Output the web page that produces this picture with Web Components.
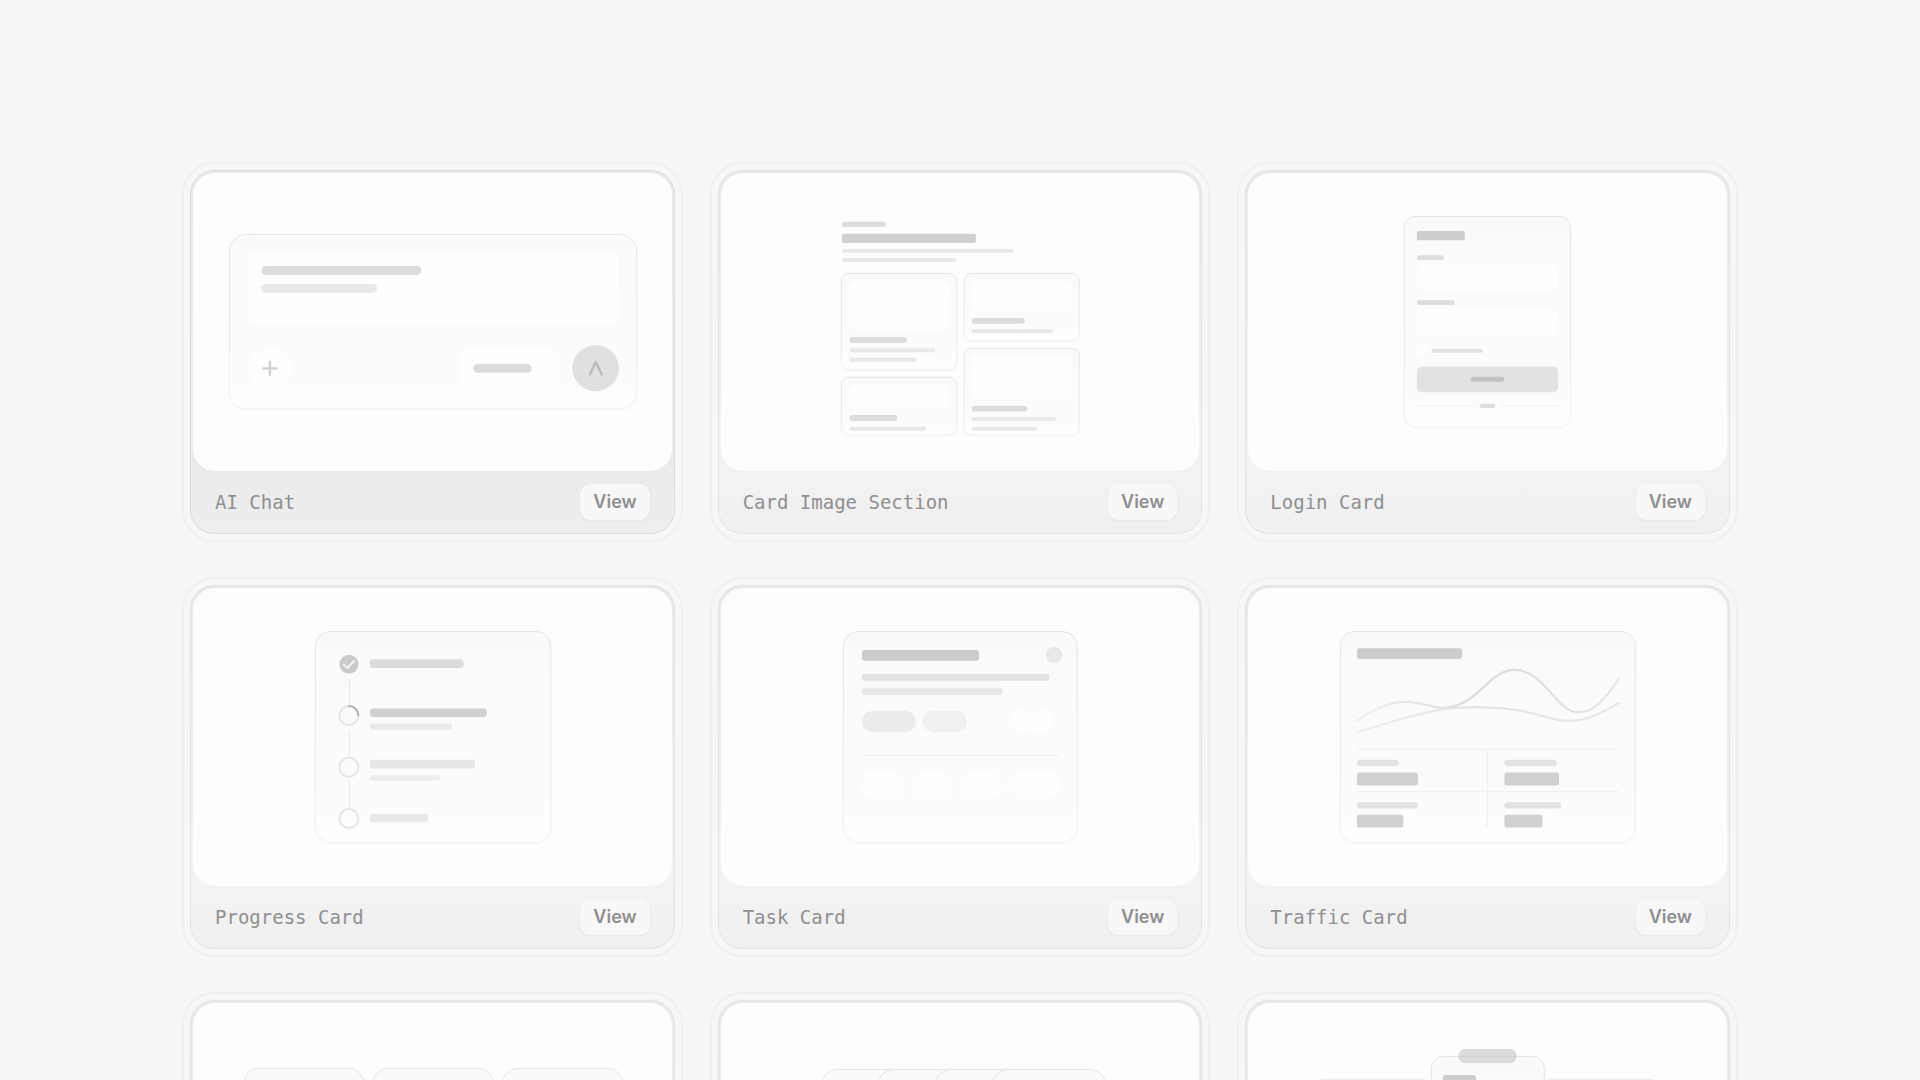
<!DOCTYPE html>
<html lang="en">
<head>
<meta charset="utf-8">
<meta name="viewport" content="width=device-width, initial-scale=1">
<title>Blocks</title>
<style>
  body {
    margin: 0;
    background: #f7f7f9;
    color: #8f8f8f;
    font-family: Inter, "Liberation Sans", sans-serif;
  }
</style>
</head>
<body>

<block-gallery>
  <block-card label="AI Chat" active><block-art name="chat"></block-art></block-card>
  <block-card label="Card Image Section"><block-art name="images"></block-art></block-card>
  <block-card label="Login Card"><block-art name="login"></block-art></block-card>
  <block-card label="Progress Card"><block-art name="progress"></block-art></block-card>
  <block-card label="Task Card"><block-art name="task"></block-art></block-card>
  <block-card label="Traffic Card"><block-art name="traffic"></block-art></block-card>
  <block-card><block-art name="columns"></block-art></block-card>
  <block-card><block-art name="stack"></block-art></block-card>
  <block-card><block-art name="pricing"></block-art></block-card>
</block-gallery>

<script>
// rounded bar from (x1, y1) to (x2, y2)
const bar = (x1, y1, x2, y2, fill, r = 2) =>
  `<rect x="${x1}" y="${y1}" width="${x2 - x1}" height="${y2 - y1}" rx="${r}" fill="${fill}"/>`;

// outlined sheet with a fading fill
const sheet = (x1, y1, x2, y2, r) =>
  `<rect x="${x1}" y="${y1}" width="${x2 - x1}" height="${y2 - y1}" rx="${r}" fill="url(#fill)" stroke="url(#edge)" filter="url(#drop)"/>`;

const ring = (cy) => `<circle cx="156" cy="${cy}" r="9.5" fill="none" stroke="#e5e5e5" stroke-width="2"/>`;

const ART = {
  chat: `
    ${sheet(36.5, 61.5, 444, 236, 17)}
    ${bar(54, 79, 426, 152, "#fefefe", 11)}
    ${bar(68.5, 93, 228.5, 102, "#dcdcdc", 4.5)}
    ${bar(68.5, 111, 184.5, 120, "#e9e9e9", 4.5)}
    <circle cx="77" cy="195.5" r="21" fill="#fefefe"/>
    <path d="M77 189v13M70.5 195.5h13" stroke="#bbb" stroke-opacity=".7" stroke-width="2.4" stroke-linecap="round"/>
    ${bar(266.5, 175, 368.5, 214, "#fefefe", 12)}
    ${bar(280.5, 191, 339, 200, "#dcdcdc", 4.5)}
    <circle cx="403" cy="195.3" r="23.2" fill="#e0e0e0"/>
    <path d="M397.3 201.5l5.7-12.5 6 12.5" fill="none" stroke="#bdbdbd" stroke-width="2.5" stroke-linecap="round" stroke-linejoin="round"/>`,

  images: `
    ${bar(121, 48.7, 165, 54, "#dcdcdc")}
    ${bar(121, 60.7, 255, 70, "#d0d0d0")}
    ${bar(121, 76, 293, 79.7, "#e8e8e8")}
    ${bar(121, 85.3, 235.6, 89, "#e8e8e8")}
    ${sheet(120.5, 100.5, 236, 196.5, 7.5)}
    ${bar(128, 108, 228.5, 157, "#fefefe", 5)}
    ${bar(128.5, 164, 186, 170, "#dcdcdc", 3)}
    ${bar(128.5, 175.5, 214.3, 179.3, "#e8e8e8")}
    ${bar(128.5, 185, 195.4, 189, "#e8e8e8")}
    ${sheet(243.5, 100.5, 358.5, 168, 7.5)}
    ${bar(251, 108, 351, 138, "#fefefe", 5)}
    ${bar(251, 145, 304.2, 150.8, "#dcdcdc", 3)}
    ${bar(251, 156, 332.3, 160, "#e8e8e8")}
    ${sheet(243.5, 175.5, 358.5, 262, 7.5)}
    ${bar(251, 183, 351, 226, "#fefefe", 5)}
    ${bar(251, 233, 306.6, 238.8, "#dcdcdc", 3)}
    ${bar(251, 244.3, 335.3, 248.3, "#e8e8e8")}
    ${bar(251, 254, 316.4, 258, "#e8e8e8")}
    ${sheet(120.5, 204.5, 236, 262, 7.5)}
    ${bar(128, 212, 228.5, 236, "#fefefe", 5)}
    ${bar(128.5, 242.3, 176.4, 248.3, "#dcdcdc", 3)}
    ${bar(128.5, 254, 205.2, 258, "#e8e8e8")}`,

  login: `
    ${sheet(156.5, 43.5, 322.5, 254, 11)}
    ${bar(169, 58, 217, 67.3, "#cdcdcd")}
    ${bar(169, 82.3, 196, 87, "#dddddd")}
    ${bar(169, 91.5, 310.5, 117, "#fefefe", 5)}
    ${bar(169, 127.3, 206.8, 132, "#dddddd")}
    ${bar(169, 136.5, 310.5, 162, "#fefefe", 5)}
    ${bar(168.5, 172.5, 180, 183.5, "#fefefe", 1)}
    ${bar(184, 176, 235, 180, "#e2e2e2")}
    ${bar(169, 194, 310.5, 219.3, "#e2e2e2", 5)}
    ${bar(223, 204, 256.5, 209, "#c2c2c2", 2.5)}
    <path d="M169 233h58M253 233h58" stroke="#f1f1f1"/>
    ${bar(232, 231, 247.5, 235.2, "#dedede")}`,

  progress: `
    ${sheet(122.5, 43.5, 358, 254.5, 15)}
    <path d="M156.5 90.3v26.7M156.5 142v27.3M156.5 193.7v26.6" stroke="#e6e6e6"/>
    <circle cx="156" cy="76.3" r="9.5" fill="#cacaca"/>
    <path d="M150.8 76.5l3.8 3.5 6.6-7" fill="none" stroke="#f4f4f4" stroke-width="2" stroke-linecap="round" stroke-linejoin="round"/>
    ${ring(127.7)}${ring(179.3)}${ring(230.7)}
    <path d="M156 118.2a9.5 9.5 0 0 1 9.5 9.5" fill="none" stroke="#b2b2b2" stroke-width="2" stroke-linecap="round"/>
    ${bar(177, 71.3, 270.8, 80, "#dcdcdc", 3)}
    ${bar(177, 120.7, 294, 129, "#d0d0d0", 3)}
    ${bar(177, 135.7, 259, 141.7, "#e9e9e9")}
    ${bar(177, 172, 282.3, 180.7, "#e6e6e6", 3)}
    ${bar(177, 187.3, 247, 193, "#eeeeee")}
    ${bar(177, 226, 235.3, 234.3, "#e7e7e7", 3)}`,

  task: `
    ${sheet(122.5, 43.5, 356.5, 254.5, 15)}
    ${bar(141, 62, 258.2, 72.7, "#cccccc", 3)}
    <circle cx="333.3" cy="67" r="8.2" fill="#e8e8e8"/>
    ${bar(141, 85.7, 328.6, 92.8, "#e2e2e2", 3)}
    ${bar(141, 99.7, 281.6, 107, "#e8e8e8", 3)}
    ${bar(141, 123, 195, 144.3, "#ececec", 10.6)}
    ${bar(202, 123, 246.4, 144.3, "#f0f0f0", 10.6)}
    <circle cx="299.8" cy="133.7" r="11.7" fill="#fefefe"/>
    <circle cx="321" cy="133.7" r="11.7" fill="#fefefe"/>
    <path d="M141 167.5h197" stroke="#ebebeb"/>
    ${bar(140.5, 183.3, 184, 210.3, "#fefefe", 13.5)}
    ${bar(190.3, 183.3, 232.5, 210.3, "#fefefe", 13.5)}
    ${bar(239, 183.3, 282, 210.3, "#fefefe", 13.5)}
    ${bar(288, 183.3, 338.4, 210.3, "#fefefe", 13.5)}`,

  traffic: `
    ${sheet(92.5, 43.5, 387.5, 254.5, 14)}
    ${bar(109, 60.3, 214.3, 71, "#cccccc", 2.5)}
    <g fill="none" stroke-width="2.2" stroke-linecap="round">
      <path d="M109 144C139 136 166 126 197 121C220 118 245 119 268 122C290 125 303 133 321 133C340 133 356 124 371 115" stroke="url(#line-soft)"/>
      <path d="M109 133C125 122 140 114 158 114C175 114 182 120 197 120C232 117 240 82 267 82C297 82 308 124.500 331 124.500C347 124.500 358 110 371 91" stroke="url(#line)"/>
    </g>
    <path d="M109 161.500h262M109 203.500h262M239.500 161.500v80" stroke="#efefef"/>
    ${bar(109, 172, 151, 178.3, "#e2e2e2", 3)}
    ${bar(109, 184.7, 170, 197.7, "#d0d0d0", 2.5)}
    ${bar(256.5, 172, 309, 178.3, "#e2e2e2", 3)}
    ${bar(256.5, 184.7, 311.3, 197.7, "#d0d0d0", 2.5)}
    ${bar(109, 214.3, 170, 220.7, "#e2e2e2", 3)}
    ${bar(109, 227, 155.4, 239.7, "#d0d0d0", 2.5)}
    ${bar(256.5, 214.3, 313.3, 220.7, "#e2e2e2", 3)}
    ${bar(256.5, 227, 294.7, 239.7, "#d0d0d0", 2.5)}`,

  columns: `
    ${sheet(50.5, 65.5, 171, 232, 15)}
    ${sheet(180, 65.5, 300.5, 232, 15)}
    ${sheet(309.5, 65.5, 430, 232, 15)}`,

  stack: `
    ${sheet(100, 66.5, 216, 232, 17)}
    ${sheet(157, 66.5, 273, 232, 17)}
    ${sheet(214, 66.5, 330, 232, 17)}
    ${sheet(271.5, 66.5, 385.5, 232, 17)}`,

  pricing: `
    <path d="M178 76.500H76a8 8 0 0 0-8 8V222h110M301 76.500h102a8 8 0 0 1 8 8V222H301" fill="#fbfbfb" stroke="#ebebeb"/>
    ${sheet(183.5, 53.5, 296.5, 244, 12)}
    ${bar(210.5, 46, 269, 60.3, "#dcdcdc", 7)}
    <path d="M211 53.500h57.500" stroke="#d0d0d0"/>
    ${bar(195, 72, 228, 82, "#cccccc")}`,
};

class BlockArt extends HTMLElement {
  constructor() {
    super();
    this.attachShadow({ mode: "open" });
  }

  static get styles() {
    return /* css */ `
      :host {
        display: block;
      }
      svg {
        display: block;
        width: 100%;
        height: auto;
      }
    `;
  }

  connectedCallback() {
    this.shadowRoot.innerHTML = /* html */`
      <style>${BlockArt.styles}</style>
      <svg viewBox="0 0 479 298" aria-hidden="true">
        <defs>
          <linearGradient id="fill" x2="0" y2="1">
            <stop stop-color="#fafafa"/>
            <stop offset=".85" stop-color="#fcfcfc"/>
            <stop offset="1" stop-color="#fefefe"/>
          </linearGradient>
          <linearGradient id="edge" x2="0" y2="1">
            <stop stop-color="#e4e4e4"/>
            <stop offset="1" stop-color="#f0f0f0"/>
          </linearGradient>
          <linearGradient id="line" gradientUnits="userSpaceOnUse" x1="109" x2="371" y1="0" y2="0">
            <stop stop-color="#f0f0f0"/>
            <stop offset=".45" stop-color="#dbdbdb"/>
            <stop offset="1" stop-color="#e6e6e6"/>
          </linearGradient>
          <linearGradient id="line-soft" gradientUnits="userSpaceOnUse" x1="109" x2="371" y1="0" y2="0">
            <stop stop-color="#f1f1f1"/>
            <stop offset=".45" stop-color="#e3e3e3"/>
            <stop offset="1" stop-color="#e8e8e8"/>
          </linearGradient>
          <filter id="drop" x="-5%" y="-5%" width="110%" height="115%">
            <feDropShadow dx="0" dy="1" stdDeviation="1" flood-opacity=".03"/>
          </filter>
        </defs>
        ${ART[this.getAttribute("name")] ?? ""}
      </svg>
    `;
  }
}

class BlockCard extends HTMLElement {
  constructor() {
    super();
    this.attachShadow({ mode: "open" });
  }

  static get styles() {
    return /* css */ `
      :host {
        display: flex;
        flex-direction: column;
        border: 1px solid #e3e3e5;
        border-radius: 24px;
        padding: 2px 2px 0;
        background: linear-gradient(#e9e9e9, #f3f3f3 80%, #f0f0f0);
        outline: 2px solid #f0f0f1;
        outline-offset: 6px;
      }
      :host([active]) {
        border-color: #dcdcdf;
        background: linear-gradient(#e9e9e9, #ebebeb 80%, #eeeeee);
      }
      .preview {
        border-radius: 22px;
        background: #fdfdfd;
        overflow: hidden;
      }
      .footer {
        display: flex;
        align-items: center;
        justify-content: space-between;
        padding: 13px 22px;
      }
      h2 {
        margin: 0;
        font: 400 19px/24px "DejaVu Sans Mono", monospace;
      }
      button {
        border: 0;
        border-radius: 11px;
        padding: 6px 13px;
        background: #f8f8f8;
        box-shadow: 0 1px 3px rgb(0 0 0 / 5%);
        color: inherit;
        font: 600 18px/24px Inter, "Liberation Sans", sans-serif;
        cursor: pointer;
      }
    `;
  }

  connectedCallback() {
    const label = this.getAttribute("label");
    const footer = /* html */`
      <div class="footer">
        <h2 id="label">${label}</h2>
        <button type="button" id="view" aria-labelledby="view label">View</button>
      </div>
    `;

    this.shadowRoot.innerHTML = /* html */`
      <style>${BlockCard.styles}</style>
      <div class="preview"><slot></slot></div>
      ${label ? footer : ""}
    `;
  }
}

class BlockGallery extends HTMLElement {
  constructor() {
    super();
    this.attachShadow({ mode: "open" });
  }

  static get styles() {
    return /* css */ `
      :host {
        display: block;
        padding: 170px 24px 64px;
      }
      main {
        display: grid;
        grid-template-columns: repeat(auto-fill, minmax(min(400px, 100%), 1fr));
        gap: 51px 43px;
        max-width: 1540px;
        margin: 0 auto;
      }
    `;
  }

  connectedCallback() {
    this.shadowRoot.innerHTML = /* html */`
      <style>${BlockGallery.styles}</style>
      <main><slot></slot></main>
    `;
  }
}

customElements.define("block-art", BlockArt);
customElements.define("block-card", BlockCard);
customElements.define("block-gallery", BlockGallery);
</script>
</body>
</html>
